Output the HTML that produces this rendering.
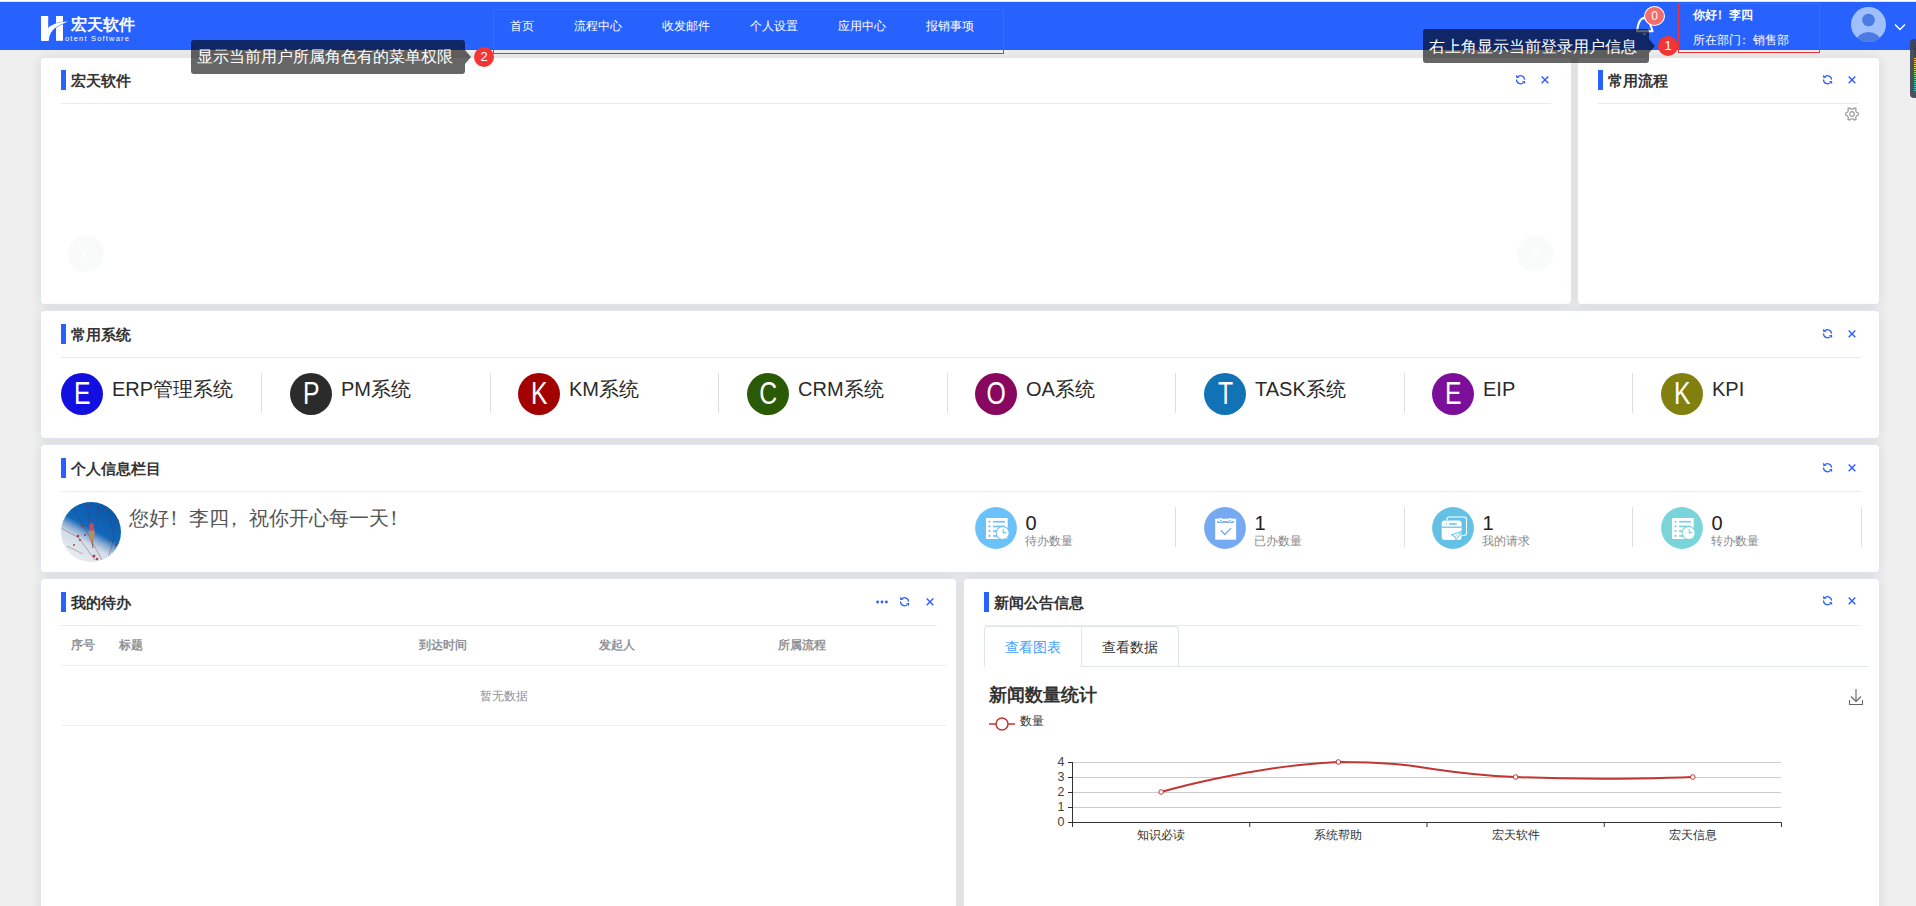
<!DOCTYPE html>
<html><head><meta charset="utf-8">
<style>
*{box-sizing:border-box;margin:0;padding:0}
html,body{width:1916px;height:906px;overflow:hidden;background:#efefef;font-family:"Liberation Sans",sans-serif;color:#333}
.a{position:absolute}
.t{position:absolute;white-space:nowrap;line-height:1}
#top{left:0;top:0;width:1916px;height:1px;background:#fff}
#top2{left:0;top:1px;width:1916px;height:1px;background:#e6e4dd}
#hdr{left:0;top:2px;width:1916px;height:48px;background:#2762ff}
.card{position:absolute;background:#fff;border:1px solid #e2e6f0;border-radius:4px;box-shadow:0 0 12px rgba(0,0,0,.09)}
.bar{position:absolute;width:5px;height:20px;background:#2762ff}
.ttl{position:absolute;font-size:15px;font-weight:bold;color:#333;white-space:nowrap;line-height:1}
.div{position:absolute;height:1px;background:#e6eaf2}
.fp{display:inline-block;position:relative;left:-0.27em}
.nav{position:absolute;top:20px;font-size:12px;color:#fff;line-height:1;white-space:nowrap}
</style></head><body>
<div class="a" id="top"></div><div class="a" id="top2"></div>
<div class="a" id="hdr"></div>


<!-- logo -->
<svg class="a" style="left:0;top:0" width="200" height="50" viewBox="0 0 200 50">
 <rect x="41" y="16" width="7.1" height="24.8" fill="#fff"/>
 <rect x="56" y="16" width="7" height="24.8" fill="#fff"/>
 <defs><clipPath id="rb"><rect x="55.5" y="16" width="8" height="25"/></clipPath></defs>
 <path clip-path="url(#rb)" d="M48.1,27.9 C52,24.6 58,21.8 68.5,21.6 C62,23.6 56,26.8 52.5,30.5 C50,33.5 49,37 48.9,40.8 L48.1,40.8 Z" fill="none" stroke="#2762ff" stroke-width="0.9"/>
 <path d="M48.1,27.9 C52,24.6 58,21.8 68.5,21.6 C62,23.6 56,26.8 52.5,30.5 C50,33.5 49,37 48.9,40.8 L48.1,40.8 Z" fill="#fff"/>
 <path d="M41,40.8 L41,16 L48.1,16 L48.1,40.8 Z" fill="#fff"/>
</svg>
<div class="t" style="left:71px;top:16.5px;font-size:16px;font-weight:bold;color:#fff">宏天软件</div>
<div class="t" style="left:65px;top:34.5px;font-size:7.5px;color:#fff;letter-spacing:1.2px">otent Software</div>
<!-- red boxes -->
<div class="a" style="left:493px;top:9px;width:511px;height:45px;border:1px solid #f0343a"></div>
<div class="a" style="left:1678px;top:3px;width:142px;height:50px;border:1px solid #f0343a"></div>
<!-- bell -->
<svg class="a" style="left:1630px;top:8px" width="30" height="32" viewBox="1630 8 30 32">
 <path d="M1637,31.2 C1637.8,26 1638.5,19.5 1644,17.8 C1649.5,19.5 1650.8,26 1652.6,31.2 Z" fill="none" stroke="#fff" stroke-width="2" stroke-linejoin="round"/>
 <path d="M1642.5,33.5 L1646.5,33.5 L1644.5,35.5 Z" fill="#fff"/>
</svg>
<div class="a" style="left:1644px;top:6px;width:21px;height:20px;border-radius:50%;background:#f56c6c;border:1px solid #fff;color:#fff;font-size:12px;line-height:18px;text-align:center">0</div>
<!-- user -->
<div class="t" style="left:1693px;top:9px;font-size:12px;font-weight:bold;color:#fff">你好<span class="fp">！</span>李四</div>
<div class="t" style="left:1693px;top:34px;font-size:12px;color:#fff">所在部门<span class="fp">：</span>销售部</div>
<svg class="a" style="left:1850px;top:6px" width="38" height="38" viewBox="0 0 38 38">
 <defs><clipPath id="av"><circle cx="18.5" cy="18.5" r="17.5"/></clipPath></defs>
 <circle cx="18.5" cy="18.5" r="17.5" fill="#a0bfff"/>
 <g clip-path="url(#av)"><circle cx="18.5" cy="14" r="6.3" fill="#4a7ae2"/><ellipse cx="18.5" cy="35" rx="12" ry="9" fill="#4a7ae2"/></g>
</svg>
<svg class="a" style="left:1893px;top:22px" width="14" height="10" viewBox="0 0 14 10"><path d="M2,2.5 L7,7.5 L12,2.5" fill="none" stroke="#fff" stroke-width="1.5"/></svg>
<!-- right widget -->
<div class="a" style="left:1910px;top:39px;width:12px;height:59px;border-radius:4px;background:rgba(62,66,80,.92)"></div>
<div class="a" style="left:1914px;top:46px;width:3px;height:1px;background:#353a45"></div><div class="a" style="left:1914px;top:48px;width:3px;height:1px;background:#353a45"></div><div class="a" style="left:1914px;top:50px;width:3px;height:1px;background:#353a45"></div><div class="a" style="left:1914px;top:52px;width:3px;height:1px;background:#353a45"></div><div class="a" style="left:1914px;top:54px;width:3px;height:1px;background:#353a45"></div><div class="a" style="left:1914px;top:56px;width:3px;height:1px;background:#353a45"></div><div class="a" style="left:1914px;top:58px;width:3px;height:1px;background:#f2a93b"></div><div class="a" style="left:1914px;top:60px;width:3px;height:1px;background:#f3b93c"></div><div class="a" style="left:1914px;top:62px;width:3px;height:1px;background:#efc83e"></div><div class="a" style="left:1914px;top:64px;width:3px;height:1px;background:#e8d441"></div><div class="a" style="left:1914px;top:66px;width:3px;height:1px;background:#d9dc45"></div><div class="a" style="left:1914px;top:68px;width:3px;height:1px;background:#c6e04b"></div><div class="a" style="left:1914px;top:70px;width:3px;height:1px;background:#b0e153"></div><div class="a" style="left:1914px;top:72px;width:3px;height:1px;background:#98e05d"></div><div class="a" style="left:1914px;top:74px;width:3px;height:1px;background:#80dc69"></div><div class="a" style="left:1914px;top:76px;width:3px;height:1px;background:#6bd877"></div><div class="a" style="left:1914px;top:78px;width:3px;height:1px;background:#5ad487"></div><div class="a" style="left:1914px;top:80px;width:3px;height:1px;background:#4fd197"></div><div class="a" style="left:1914px;top:82px;width:3px;height:1px;background:#47cfa8"></div><div class="a" style="left:1914px;top:84px;width:3px;height:1px;background:#42cdb6"></div><div class="a" style="left:1914px;top:86px;width:3px;height:1px;background:#3fcbc2"></div><div class="a" style="left:1914px;top:88px;width:3px;height:1px;background:#3ec9cb"></div><div class="a" style="left:1914px;top:90px;width:3px;height:1px;background:#3dc7d2"></div>
<!-- cards -->
<div class="card" style="left:40px;top:57px;width:1532px;height:248px"></div>
<div class="card" style="left:1577px;top:57px;width:303px;height:248px"></div>
<div class="card" style="left:40px;top:310px;width:1840px;height:129px"></div>
<div class="card" style="left:40px;top:444px;width:1840px;height:129px"></div>
<div class="card" style="left:40px;top:578px;width:917px;height:340px"></div>
<div class="card" style="left:963px;top:578px;width:917px;height:340px"></div>

<!-- card titles -->
<div class="bar" style="left:61px;top:70px"></div><div class="ttl" style="left:71px;top:73px">宏天软件</div>
<div class="div" style="left:61px;top:103px;width:1490px"></div>
<div class="bar" style="left:1598px;top:70px"></div><div class="ttl" style="left:1608px;top:73px">常用流程</div>
<div class="div" style="left:1598px;top:103px;width:260px"></div>

<div class="bar" style="left:61px;top:324px"></div><div class="ttl" style="left:71px;top:327px">常用系统</div>
<div class="div" style="left:61px;top:357px;width:1799px"></div>
<div class="bar" style="left:61px;top:458px"></div><div class="ttl" style="left:71px;top:461px">个人信息栏目</div>
<div class="div" style="left:61px;top:491px;width:1799px"></div>
<div class="bar" style="left:61px;top:592px"></div><div class="ttl" style="left:71px;top:595px">我的待办</div>
<div class="div" style="left:61px;top:625px;width:876px"></div>
<div class="bar" style="left:984px;top:592px"></div><div class="ttl" style="left:994px;top:595px">新闻公告信息</div>
<div class="div" style="left:984px;top:625px;width:875px"></div>

<!-- nav -->
<div class="nav" style="left:510px">首页</div>
<div class="nav" style="left:574px">流程中心</div>
<div class="nav" style="left:662px">收发邮件</div>
<div class="nav" style="left:750px">个人设置</div>
<div class="nav" style="left:838px">应用中心</div>
<div class="nav" style="left:926px">报销事项</div>


<svg class="a" style="left:1516px;top:75px;overflow:visible" width="10" height="10" viewBox="0 0 10 10"><g fill="none" stroke="#2a5cff" stroke-width="1.25"><path d="M2.1,1.5 A4.1,4.1 0 0 1 8.6,4.6"/><path d="M0.5,4.5 A4.1,4.1 0 0 0 7.4,7.6"/></g><path d="M0.2,-0.2 L0.2,2.9 L3.5,2.7 Z" fill="#2a5cff"/><path d="M9.1,6.0 L9.1,9.0 L6.0,6.2 Z" fill="#2a5cff"/></svg>
<svg class="a" style="left:1541px;top:76px" width="8" height="8" viewBox="0 0 8 8"><path d="M0.7,0.5 L7.3,7.2 M7.3,0.5 L0.7,7.2" stroke="#2a5cff" stroke-width="1.35" fill="none"/></svg>
<svg class="a" style="left:1823px;top:75px;overflow:visible" width="10" height="10" viewBox="0 0 10 10"><g fill="none" stroke="#2a5cff" stroke-width="1.25"><path d="M2.1,1.5 A4.1,4.1 0 0 1 8.6,4.6"/><path d="M0.5,4.5 A4.1,4.1 0 0 0 7.4,7.6"/></g><path d="M0.2,-0.2 L0.2,2.9 L3.5,2.7 Z" fill="#2a5cff"/><path d="M9.1,6.0 L9.1,9.0 L6.0,6.2 Z" fill="#2a5cff"/></svg>
<svg class="a" style="left:1848px;top:76px" width="8" height="8" viewBox="0 0 8 8"><path d="M0.7,0.5 L7.3,7.2 M7.3,0.5 L0.7,7.2" stroke="#2a5cff" stroke-width="1.35" fill="none"/></svg>
<svg class="a" style="left:1823px;top:328.5px;overflow:visible" width="10" height="10" viewBox="0 0 10 10"><g fill="none" stroke="#2a5cff" stroke-width="1.25"><path d="M2.1,1.5 A4.1,4.1 0 0 1 8.6,4.6"/><path d="M0.5,4.5 A4.1,4.1 0 0 0 7.4,7.6"/></g><path d="M0.2,-0.2 L0.2,2.9 L3.5,2.7 Z" fill="#2a5cff"/><path d="M9.1,6.0 L9.1,9.0 L6.0,6.2 Z" fill="#2a5cff"/></svg>
<svg class="a" style="left:1848px;top:329.5px" width="8" height="8" viewBox="0 0 8 8"><path d="M0.7,0.5 L7.3,7.2 M7.3,0.5 L0.7,7.2" stroke="#2a5cff" stroke-width="1.35" fill="none"/></svg>
<svg class="a" style="left:1823px;top:462.5px;overflow:visible" width="10" height="10" viewBox="0 0 10 10"><g fill="none" stroke="#2a5cff" stroke-width="1.25"><path d="M2.1,1.5 A4.1,4.1 0 0 1 8.6,4.6"/><path d="M0.5,4.5 A4.1,4.1 0 0 0 7.4,7.6"/></g><path d="M0.2,-0.2 L0.2,2.9 L3.5,2.7 Z" fill="#2a5cff"/><path d="M9.1,6.0 L9.1,9.0 L6.0,6.2 Z" fill="#2a5cff"/></svg>
<svg class="a" style="left:1848px;top:463.5px" width="8" height="8" viewBox="0 0 8 8"><path d="M0.7,0.5 L7.3,7.2 M7.3,0.5 L0.7,7.2" stroke="#2a5cff" stroke-width="1.35" fill="none"/></svg>
<svg class="a" style="left:900px;top:596.5px;overflow:visible" width="10" height="10" viewBox="0 0 10 10"><g fill="none" stroke="#2a5cff" stroke-width="1.25"><path d="M2.1,1.5 A4.1,4.1 0 0 1 8.6,4.6"/><path d="M0.5,4.5 A4.1,4.1 0 0 0 7.4,7.6"/></g><path d="M0.2,-0.2 L0.2,2.9 L3.5,2.7 Z" fill="#2a5cff"/><path d="M9.1,6.0 L9.1,9.0 L6.0,6.2 Z" fill="#2a5cff"/></svg>
<svg class="a" style="left:925.5px;top:597.5px" width="8" height="8" viewBox="0 0 8 8"><path d="M0.7,0.5 L7.3,7.2 M7.3,0.5 L0.7,7.2" stroke="#2a5cff" stroke-width="1.35" fill="none"/></svg>
<svg class="a" style="left:1823px;top:596px;overflow:visible" width="10" height="10" viewBox="0 0 10 10"><g fill="none" stroke="#2a5cff" stroke-width="1.25"><path d="M2.1,1.5 A4.1,4.1 0 0 1 8.6,4.6"/><path d="M0.5,4.5 A4.1,4.1 0 0 0 7.4,7.6"/></g><path d="M0.2,-0.2 L0.2,2.9 L3.5,2.7 Z" fill="#2a5cff"/><path d="M9.1,6.0 L9.1,9.0 L6.0,6.2 Z" fill="#2a5cff"/></svg>
<svg class="a" style="left:1848px;top:597px" width="8" height="8" viewBox="0 0 8 8"><path d="M0.7,0.5 L7.3,7.2 M7.3,0.5 L0.7,7.2" stroke="#2a5cff" stroke-width="1.35" fill="none"/></svg>
<svg class="a" style="left:876px;top:600px" width="12" height="4" viewBox="0 0 12 4"><circle cx="1.6" cy="2" r="1.4" fill="#2a5cff"/><circle cx="6" cy="2" r="1.4" fill="#2a5cff"/><circle cx="10.4" cy="2" r="1.4" fill="#2a5cff"/></svg>
<div class="a" style="left:68px;top:236px;width:36px;height:36px;border-radius:50%;background:#f9fafa"></div><svg class="a" style="left:80px;top:247px" width="12" height="14" viewBox="0 0 12 14"><path d="M8,2 L3,7 L8,12" stroke="#ffffff" stroke-width="1.6" fill="none"/></svg>
<div class="a" style="left:1517px;top:236px;width:36px;height:36px;border-radius:50%;background:#f9fafa"></div><svg class="a" style="left:1529px;top:247px" width="12" height="14" viewBox="0 0 12 14"><path d="M4,2 L9,7 L4,12" stroke="#ffffff" stroke-width="1.6" fill="none"/></svg>
<svg class="a" style="left:1845px;top:107px" width="14" height="14" viewBox="0 0 14 14"><g fill="none" stroke="#999" stroke-width="1.2" stroke-linejoin="round"><path d="M11.48,5.01 L12.05,5.74 L13.52,5.97 L13.52,8.03 L12.05,8.26 L11.48,8.99 L10.96,9.88 L10.61,10.74 L11.15,12.13 L9.37,13.16 L8.43,12.00 L7.51,11.87 L6.49,11.87 L5.57,12.00 L4.63,13.16 L2.85,12.13 L3.39,10.74 L3.04,9.88 L2.52,8.99 L1.95,8.26 L0.48,8.03 L0.48,5.97 L1.95,5.74 L2.52,5.01 L3.04,4.12 L3.39,3.26 L2.85,1.87 L4.63,0.84 L5.57,2.00 L6.49,2.13 L7.51,2.13 L8.43,2.00 L9.37,0.84 L11.15,1.87 L10.61,3.26 L10.96,4.12 Z"/><circle cx="7" cy="7" r="2.3"/></g></svg>
<div class="a" style="left:61px;top:373px;width:42px;height:42px;border-radius:50%;background:#130fe0;color:#fff;font-size:31px;line-height:41px;text-align:center"><span style="display:inline-block;transform:scaleX(.8)">E</span></div>
<div class="t" style="left:112px;top:379px;font-size:20px;color:#2a2a2a">ERP管理系统</div>
<div class="a" style="left:261px;top:373px;width:1px;height:40px;background:#dcdfe6"></div>
<div class="a" style="left:290px;top:373px;width:42px;height:42px;border-radius:50%;background:#2b2b2b;color:#fff;font-size:31px;line-height:41px;text-align:center"><span style="display:inline-block;transform:scaleX(.8)">P</span></div>
<div class="t" style="left:341px;top:379px;font-size:20px;color:#2a2a2a">PM系统</div>
<div class="a" style="left:490px;top:373px;width:1px;height:40px;background:#dcdfe6"></div>
<div class="a" style="left:518px;top:373px;width:42px;height:42px;border-radius:50%;background:#a30000;color:#fff;font-size:31px;line-height:41px;text-align:center"><span style="display:inline-block;transform:scaleX(.8)">K</span></div>
<div class="t" style="left:569px;top:379px;font-size:20px;color:#2a2a2a">KM系统</div>
<div class="a" style="left:718px;top:373px;width:1px;height:40px;background:#dcdfe6"></div>
<div class="a" style="left:747px;top:373px;width:42px;height:42px;border-radius:50%;background:#2a5a06;color:#fff;font-size:31px;line-height:41px;text-align:center"><span style="display:inline-block;transform:scaleX(.8)">C</span></div>
<div class="t" style="left:798px;top:379px;font-size:20px;color:#2a2a2a">CRM系统</div>
<div class="a" style="left:947px;top:373px;width:1px;height:40px;background:#dcdfe6"></div>
<div class="a" style="left:975px;top:373px;width:42px;height:42px;border-radius:50%;background:#88075f;color:#fff;font-size:31px;line-height:41px;text-align:center"><span style="display:inline-block;transform:scaleX(.8)">O</span></div>
<div class="t" style="left:1026px;top:379px;font-size:20px;color:#2a2a2a">OA系统</div>
<div class="a" style="left:1175px;top:373px;width:1px;height:40px;background:#dcdfe6"></div>
<div class="a" style="left:1204px;top:373px;width:42px;height:42px;border-radius:50%;background:#1272b6;color:#fff;font-size:31px;line-height:41px;text-align:center"><span style="display:inline-block;transform:scaleX(.8)">T</span></div>
<div class="t" style="left:1255px;top:379px;font-size:20px;color:#2a2a2a">TASK系统</div>
<div class="a" style="left:1404px;top:373px;width:1px;height:40px;background:#dcdfe6"></div>
<div class="a" style="left:1432px;top:373px;width:42px;height:42px;border-radius:50%;background:#7b0f9a;color:#fff;font-size:31px;line-height:41px;text-align:center"><span style="display:inline-block;transform:scaleX(.8)">E</span></div>
<div class="t" style="left:1483px;top:379px;font-size:20px;color:#2a2a2a">EIP</div>
<div class="a" style="left:1632px;top:373px;width:1px;height:40px;background:#dcdfe6"></div>
<div class="a" style="left:1661px;top:373px;width:42px;height:42px;border-radius:50%;background:#81800e;color:#fff;font-size:31px;line-height:41px;text-align:center"><span style="display:inline-block;transform:scaleX(.8)">K</span></div>
<div class="t" style="left:1712px;top:379px;font-size:20px;color:#2a2a2a">KPI</div>
<svg class="a" style="left:61px;top:502px" width="60" height="60" viewBox="0 0 60 60">
<defs><clipPath id="pc"><circle cx="30" cy="30" r="30"/></clipPath>
<linearGradient id="sky" x1="0.72" y1="0.1" x2="0.28" y2="0.9"><stop offset="0" stop-color="#0a5aae"/><stop offset="0.45" stop-color="#1469bb"/><stop offset="0.58" stop-color="#86a8d0"/><stop offset="0.72" stop-color="#d3dce8"/><stop offset="1" stop-color="#e6eaf0"/></linearGradient>
<filter id="bl" x="-10%" y="-10%" width="120%" height="120%"><feGaussianBlur stdDeviation="0.8"/></filter></defs>
<g clip-path="url(#pc)"><rect width="60" height="60" fill="url(#sky)"/><g>
<g stroke="#5a3038" stroke-width="0.7" fill="none" opacity="0.5"><path d="M12,6 L28,34 L42,60"/><path d="M26,0 L29,26"/><path d="M48,8 L53,36 L46,60"/><path d="M0,26 L18,36 L34,58"/><path d="M58,16 L44,32"/><path d="M6,44 L22,52"/><path d="M38,4 L36,24"/></g>
<g fill="#a82a3a" opacity="0.85"><circle cx="21" cy="24" r="1.2"/><circle cx="17" cy="34" r="1.3"/><circle cx="19" cy="38" r="1.1"/><circle cx="27" cy="5" r="1"/><circle cx="44" cy="8" r="1.1"/><circle cx="57" cy="18" r="1.2"/><circle cx="33" cy="54" r="1.5"/><circle cx="36" cy="57" r="1.3"/><circle cx="13" cy="43" r="1"/><circle cx="55" cy="43" r="1.1"/><circle cx="24" cy="33" r="1"/><circle cx="49" cy="38" r="1"/><circle cx="29" cy="18" r="1"/></g>
<ellipse cx="30.8" cy="32" rx="2.8" ry="8" fill="#b88a68"/><ellipse cx="30.5" cy="25" rx="2.4" ry="4" fill="#c84a58"/><path d="M31,39 L32,46" stroke="#8a6a50" stroke-width="1.2"/>
</g></g></svg>
<div class="t" style="left:129px;top:508px;font-size:20px;color:#555">您好<span class="fp">！</span>李四<span class="fp">，</span>祝你开心每一天<span class="fp">！</span></div>
<svg class="a" style="left:975px;top:507px" width="42" height="42" viewBox="0 0 42 42"><circle cx="21" cy="21" r="20.9" fill="#6bc2fb"/><rect x="11" y="10.9" width="21.7" height="21" rx="0.6" fill="#fff"/><g fill="#6bc2fb"><circle cx="14.5" cy="14.7" r="1.05"/><circle cx="14.5" cy="19.4" r="1.05"/><circle cx="14.5" cy="24.1" r="1.05"/><circle cx="14.5" cy="28.9" r="1.05"/><rect x="18.1" y="13.9" width="11.8" height="1.7"/><rect x="18.1" y="18.6" width="11.8" height="1.7"/><rect x="18.1" y="23.3" width="5" height="1.7"/><rect x="18.1" y="28.1" width="5" height="1.7"/></g><circle cx="27.7" cy="26.1" r="7.1" fill="#6bc2fb"/><circle cx="27.7" cy="26.1" r="6" fill="#fff"/><path d="M28.3,22.3 L28.3,25.6 L31.2,25.6" stroke="#6bc2fb" stroke-width="1.2" fill="none"/></svg>
<div class="t" style="left:1025.5px;top:513px;font-size:20px;color:#222">0</div>
<div class="t" style="left:1025px;top:534.5px;font-size:12px;color:#8a8a8a">待办数量</div>
<div class="a" style="left:1175px;top:507px;width:1px;height:40px;background:#dcdfe6"></div>
<svg class="a" style="left:1204px;top:507px" width="42" height="42" viewBox="0 0 42 42"><circle cx="21" cy="21" r="20.9" fill="#75a9f1"/><rect x="11.2" y="11.7" width="20.9" height="21" fill="#fff"/><rect x="13.1" y="14.2" width="16.8" height="1.7" fill="#75a9f1"/><circle cx="16.7" cy="13" r="1.9" fill="#fff"/><circle cx="26.1" cy="13" r="1.9" fill="#fff"/><circle cx="16.7" cy="13.4" r="0.8" fill="#75a9f1"/><circle cx="26.1" cy="13.4" r="0.8" fill="#75a9f1"/><path d="M16.7,23.3 L20.8,27.5 L27.2,21.1" stroke="#75a9f1" stroke-width="1.3" fill="none"/></svg>
<div class="t" style="left:1254.5px;top:513px;font-size:20px;color:#222">1</div>
<div class="t" style="left:1254px;top:534.5px;font-size:12px;color:#8a8a8a">已办数量</div>
<div class="a" style="left:1404px;top:507px;width:1px;height:40px;background:#dcdfe6"></div>
<svg class="a" style="left:1432px;top:507px" width="42" height="42" viewBox="0 0 42 42"><circle cx="21" cy="21" r="20.9" fill="#62c1e5"/><rect x="14.9" y="10" width="19.6" height="18.5" rx="2.5" fill="none" stroke="#fff" stroke-width="1.1"/><rect x="9.2" y="13.1" width="20.9" height="20.3" rx="3.2" fill="#62c1e5"/><rect x="9.7" y="13.6" width="19.9" height="19.3" rx="3" fill="#fff"/><rect x="9.7" y="19.6" width="19.9" height="1.2" fill="#62c1e5"/><circle cx="14.4" cy="17" r="0.8" fill="#62c1e5"/><rect x="16.9" y="16.3" width="8" height="1.5" rx="0.7" fill="#62c1e5"/><path d="M19.4,27.9 L31.2,24 L24.1,32.8 L22.8,29.6 Z" fill="#fff" stroke="#62c1e5" stroke-width="1"/><path d="M22.8,29.6 L31,24.2" stroke="#62c1e5" stroke-width="0.6"/></svg>
<div class="t" style="left:1482.5px;top:513px;font-size:20px;color:#222">1</div>
<div class="t" style="left:1482px;top:534.5px;font-size:12px;color:#8a8a8a">我的请求</div>
<div class="a" style="left:1632px;top:507px;width:1px;height:40px;background:#dcdfe6"></div>
<svg class="a" style="left:1661px;top:507px" width="42" height="42" viewBox="0 0 42 42"><circle cx="21" cy="21" r="20.9" fill="#79d5d9"/><rect x="11" y="10.9" width="21.7" height="21" rx="0.6" fill="#fff"/><g fill="#79d5d9"><circle cx="14.5" cy="14.7" r="1.05"/><circle cx="14.5" cy="19.4" r="1.05"/><circle cx="14.5" cy="24.1" r="1.05"/><circle cx="14.5" cy="28.9" r="1.05"/><rect x="18.1" y="13.9" width="11.8" height="1.7"/><rect x="18.1" y="18.6" width="11.8" height="1.7"/><rect x="18.1" y="23.3" width="5" height="1.7"/><rect x="18.1" y="28.1" width="5" height="1.7"/></g><circle cx="27.7" cy="26.1" r="7.1" fill="#79d5d9"/><circle cx="27.7" cy="26.1" r="6" fill="#fff"/><path d="M28.3,22.3 L28.3,25.6 L31.2,25.6" stroke="#79d5d9" stroke-width="1.2" fill="none"/></svg>
<div class="t" style="left:1711.5px;top:513px;font-size:20px;color:#222">0</div>
<div class="t" style="left:1711px;top:534.5px;font-size:12px;color:#8a8a8a">转办数量</div>
<div class="a" style="left:1861px;top:507px;width:1px;height:40px;background:#dcdfe6"></div>
<div class="t" style="left:71px;top:639px;font-size:12px;font-weight:bold;color:#909399">序号</div>
<div class="t" style="left:119px;top:639px;font-size:12px;font-weight:bold;color:#909399">标题</div>
<div class="t" style="left:419px;top:639px;font-size:12px;font-weight:bold;color:#909399">到达时间</div>
<div class="t" style="left:599px;top:639px;font-size:12px;font-weight:bold;color:#909399">发起人</div>
<div class="t" style="left:778px;top:639px;font-size:12px;font-weight:bold;color:#909399">所属流程</div>
<div class="a" style="left:61px;top:665px;width:886px;height:1px;background:#ebeef5"></div>
<div class="t" style="left:480px;top:690px;font-size:12px;color:#909399">暂无数据</div>
<div class="a" style="left:61px;top:725px;width:886px;height:1px;background:#ebeef5"></div>
<div class="a" style="left:984px;top:666px;width:885px;height:1px;background:#dfe4ed"></div>
<div class="a" style="left:984px;top:626px;width:195px;height:41px;border:1px solid #dfe4ed;border-bottom:none;border-radius:4px 4px 0 0;background:#fff"></div>
<div class="a" style="left:1081px;top:627px;width:1px;height:40px;background:#dfe4ed"></div>
<div class="a" style="left:1082px;top:666px;width:96px;height:1px;background:#dfe4ed"></div>
<div class="t" style="left:1005px;top:640px;font-size:14px;color:#409eff">查看图表</div>
<div class="t" style="left:1102px;top:640px;font-size:14px;color:#303133">查看数据</div>
<div class="t" style="left:989px;top:686px;font-size:18px;font-weight:bold;color:#333">新闻数量统计</div>
<svg class="a" style="left:1848px;top:688px" width="16" height="18" viewBox="0 0 16 18"><g fill="none" stroke="#666" stroke-width="1.1"><path d="M8,1 L8,13 M3,8.5 L8,13.5 L13,8.5"/><path d="M1.5,12 L1.5,16.5 L14.5,16.5 L14.5,12"/></g></svg>
<svg class="a" style="left:988px;top:716px" width="30" height="16" viewBox="0 0 30 16"><path d="M1,8 L27,8" stroke="#c23531" stroke-width="1.5"/><circle cx="14" cy="8" r="6" fill="#fff" stroke="#c23531" stroke-width="1.5"/></svg>
<div class="t" style="left:1020px;top:715px;font-size:12px;color:#333">数量</div>
<svg class="a" style="left:0;top:0;pointer-events:none" width="1916" height="906" viewBox="0 0 1916 906">
<path d="M1068,822.5 L1073,822.5" stroke="#333" stroke-width="1"/>
<text x="1064.5" y="825.5" font-size="12.5" fill="#444" text-anchor="end" font-family="Liberation Sans, sans-serif">0</text>
<path d="M1073,807.5 L1781,807.5" stroke="#ccc" stroke-width="1"/>
<path d="M1068,807.5 L1073,807.5" stroke="#333" stroke-width="1"/>
<text x="1064.5" y="810.5" font-size="12.5" fill="#444" text-anchor="end" font-family="Liberation Sans, sans-serif">1</text>
<path d="M1073,792.5 L1781,792.5" stroke="#ccc" stroke-width="1"/>
<path d="M1068,792.5 L1073,792.5" stroke="#333" stroke-width="1"/>
<text x="1064.5" y="795.5" font-size="12.5" fill="#444" text-anchor="end" font-family="Liberation Sans, sans-serif">2</text>
<path d="M1073,777.5 L1781,777.5" stroke="#ccc" stroke-width="1"/>
<path d="M1068,777.5 L1073,777.5" stroke="#333" stroke-width="1"/>
<text x="1064.5" y="780.5" font-size="12.5" fill="#444" text-anchor="end" font-family="Liberation Sans, sans-serif">3</text>
<path d="M1073,762.5 L1781,762.5" stroke="#ccc" stroke-width="1"/>
<path d="M1068,762.5 L1073,762.5" stroke="#333" stroke-width="1"/>
<text x="1064.5" y="765.5" font-size="12.5" fill="#444" text-anchor="end" font-family="Liberation Sans, sans-serif">4</text>
<path d="M1072.5,762 L1072.5,823" stroke="#333" stroke-width="1"/>
<path d="M1072.5,822.5 L1781.5,822.5" stroke="#333" stroke-width="1"/>
<path d="M1072.50,822.5 L1072.50,827" stroke="#333" stroke-width="1"/>
<path d="M1249.75,822.5 L1249.75,827" stroke="#333" stroke-width="1"/>
<path d="M1427.00,822.5 L1427.00,827" stroke="#333" stroke-width="1"/>
<path d="M1604.25,822.5 L1604.25,827" stroke="#333" stroke-width="1"/>
<path d="M1781.50,822.5 L1781.50,827" stroke="#333" stroke-width="1"/>
<text x="1161.12" y="839" font-size="12" fill="#333" text-anchor="middle" font-family="Liberation Sans, sans-serif">知识必读</text>
<text x="1338.38" y="839" font-size="12" fill="#333" text-anchor="middle" font-family="Liberation Sans, sans-serif">系统帮助</text>
<text x="1515.62" y="839" font-size="12" fill="#333" text-anchor="middle" font-family="Liberation Sans, sans-serif">宏天软件</text>
<text x="1692.88" y="839" font-size="12" fill="#333" text-anchor="middle" font-family="Liberation Sans, sans-serif">宏天信息</text>
<path d="M1161.1,792 C1161.1,792 1249.6,765.8 1338.4,762 C1426.9,762 1427.2,773.2 1515.6,777 C1604.5,780.7 1692.8,777 1692.8,777" fill="none" stroke="#c23531" stroke-width="2"/>
<circle cx="1161.1" cy="792" r="2.3" fill="#fff" stroke="#c23531" stroke-width="1"/>
<circle cx="1338.4" cy="762" r="2.3" fill="#fff" stroke="#c23531" stroke-width="1"/>
<circle cx="1515.6" cy="777" r="2.3" fill="#fff" stroke="#c23531" stroke-width="1"/>
<circle cx="1692.8" cy="777" r="2.3" fill="#fff" stroke="#c23531" stroke-width="1"/>
</svg>
<!-- tooltips -->
<div class="a" style="left:191px;top:40px;width:274px;height:34px;border-radius:3px;background:rgba(0,0,0,.6)"></div>
<div class="t" style="left:197px;top:49px;font-size:16px;color:#fff">显示当前用户所属角色有的菜单权限</div>
<svg class="a" style="left:465px;top:50px" width="7" height="14" viewBox="0 0 7 14"><path d="M0,0 L6,7 L0,14 Z" fill="rgba(0,0,0,.6)"/></svg>
<div class="a" style="left:474px;top:47px;width:20px;height:20px;border-radius:50%;background:#f33535;color:#fff;font-size:13px;line-height:20px;text-align:center">2</div>

<div class="a" style="left:1423px;top:29px;width:226px;height:34px;border-radius:3px;background:rgba(0,0,0,.6)"></div>
<div class="t" style="left:1429px;top:38.5px;font-size:16px;color:#fff">右上角显示当前登录用户信息</div>
<svg class="a" style="left:1649px;top:39px" width="7" height="14" viewBox="0 0 7 14"><path d="M0,0 L6,7 L0,14 Z" fill="rgba(0,0,0,.6)"/></svg>
<div class="a" style="left:1658px;top:36px;width:20px;height:20px;border-radius:50%;background:#f33535;color:#fff;font-size:13px;line-height:20px;text-align:center">1</div>
</body></html>
